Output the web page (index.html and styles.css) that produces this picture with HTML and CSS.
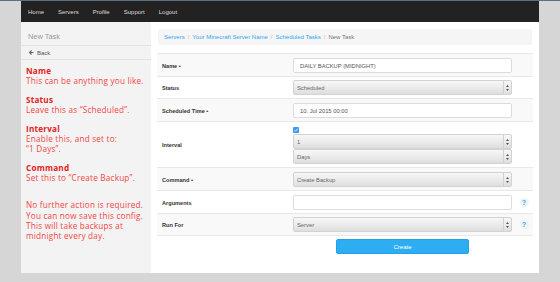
FILE: index.html
```html
<!DOCTYPE html>
<html lang="en">
  <head>
    <meta charset="UTF-8" />
    <meta name="viewport" content="width=device-width, initial-scale=1.0" />
    <title>New Task</title>
    <link rel="stylesheet" href="styles.css">
  </head>
  <body>
    <div class="frame">
      <nav class="navbar">
        <a href="#">Home</a>
        <a href="#">Servers</a>
        <a href="#">Profile</a>
        <a href="#">Support</a>
        <a href="#">Logout</a>
      </nav>

      <div class="layout">
        <aside class="sidebar">
          <div class="side_title">New Task</div>
          <a href="#" class="side_back">
            <svg width="5" height="5" viewBox="0 0 10 10">
              <path d="M5 1 L1 5 L5 9 M1 5 H9" fill="none" stroke="#666" stroke-width="2.2" />
            </svg>
            Back
          </a>

          <div class="notes">
            <div class="note">
              <b>Name</b>
              <p>This can be anything you like.</p>
            </div>
            <div class="note">
              <b>Status</b>
              <p>Leave this as “Scheduled”.</p>
            </div>
            <div class="note">
              <b>Interval</b>
              <p>Enable this, and set to:<br />“1 Days”.</p>
            </div>
            <div class="note">
              <b>Command</b>
              <p>Set this to “Create Backup”.</p>
            </div>
            <div class="note note_last">
              <p>No further action is required.<br />You can now save this config.<br />This will take backups at<br />midnight every day.</p>
            </div>
          </div>
        </aside>

        <main class="content">
          <ol class="breadcrumb">
            <li><a href="#">Servers</a></li>
            <li><a href="#">Your Minecraft Server Name</a></li>
            <li><a href="#">Scheduled Tasks</a></li>
            <li class="active">New Task</li>
          </ol>

          <form class="task_form">
            <div class="form_row striped">
              <label for="name">Name •</label>
              <input type="text" id="name" class="field" value="DAILY BACKUP (MIDNIGHT)" />
            </div>

            <div class="form_row slim">
              <label for="status">Status</label>
              <div class="select_wrap">
                <select id="status"><option>Scheduled</option></select>
                <span class="caret">
                  <svg width="3" height="6" viewBox="0 0 6 12"><path d="M3 0 L6 4 H0 Z M3 12 L6 8 H0 Z" fill="#555" /></svg>
                </span>
              </div>
            </div>

            <div class="form_row striped">
              <label for="time">Scheduled Time •</label>
              <input type="text" id="time" class="field" value="10. Jul 2015 00:00" />
            </div>

            <div class="form_row">
              <label>Interval</label>
              <div class="stack">
                <span class="check">
                  <svg width="6" height="6" viewBox="0 0 12 12"><path d="M3 6.5 L5 8.5 L9.5 3.5" fill="none" stroke="#fff" stroke-width="1.8" /></svg>
                </span>
                <div class="select_wrap">
                  <select><option>1</option></select>
                  <span class="caret">
                    <svg width="3" height="6" viewBox="0 0 6 12"><path d="M3 0 L6 4 H0 Z M3 12 L6 8 H0 Z" fill="#555" /></svg>
                  </span>
                </div>
                <div class="select_wrap">
                  <select><option>Days</option></select>
                  <span class="caret">
                    <svg width="3" height="6" viewBox="0 0 6 12"><path d="M3 0 L6 4 H0 Z M3 12 L6 8 H0 Z" fill="#555" /></svg>
                  </span>
                </div>
              </div>
            </div>

            <div class="form_row striped">
              <label for="command">Command •</label>
              <div class="select_wrap">
                <select id="command"><option>Create Backup</option></select>
                <span class="caret">
                  <svg width="3" height="6" viewBox="0 0 6 12"><path d="M3 0 L6 4 H0 Z M3 12 L6 8 H0 Z" fill="#555" /></svg>
                </span>
              </div>
            </div>

            <div class="form_row">
              <label for="args">Arguments</label>
              <input type="text" id="args" class="field" value="" />
              <span class="help">?</span>
            </div>

            <div class="form_row striped slim last">
              <label for="runfor">Run For</label>
              <div class="select_wrap">
                <select id="runfor"><option>Server</option></select>
                <span class="caret">
                  <svg width="3" height="6" viewBox="0 0 6 12"><path d="M3 0 L6 4 H0 Z M3 12 L6 8 H0 Z" fill="#555" /></svg>
                </span>
              </div>
              <span class="help">?</span>
            </div>

            <div class="button_row">
              <input type="submit" class="submit_btn" value="Create" />
            </div>
          </form>
        </main>
      </div>
    </div>
  </body>
</html>
```

FILE: styles.css
```css
* {
  margin: 0;
  padding: 0;
  box-sizing: border-box;
}

body {
  font-family: "Liberation Sans", Arial, sans-serif;
  background-color: #d6d6d6;
  border-top: 1px solid #5e6e7d;
  height: 282px;
  overflow: hidden;
}

a {
  text-decoration: none;
}

.frame {
  width: 518px;
  margin-left: 21px;
  background-color: #fff;
}

/* top navigation */
.navbar {
  height: 21px;
  background-color: #222;
  display: flex;
  align-items: center;
  gap: 14px;
  padding-left: 7px;
}

.navbar a {
  color: #ddd;
  font-size: 6px;
}

.layout {
  display: flex;
  height: 251px;
}

/* left column */
.sidebar {
  width: 130px;
  background-color: #f3f3f3;
}

.side_title {
  height: 24px;
  padding: 10px 7px 0;
  font-size: 7.4px;
  line-height: 10px;
  color: #9a9a9a;
  border-bottom: 1px solid #e3e3e3;
}

.side_back {
  display: flex;
  align-items: center;
  gap: 3px;
  height: 14px;
  padding-left: 8px;
  font-size: 6px;
  color: #555;
  border-bottom: 1px solid #e3e3e3;
}

.notes {
  padding: 6px 0 6px 5px;
  font-family: "Open Sans", "Noto Sans", sans-serif;
  font-size: 8.2px;
  letter-spacing: 0.2px;
  line-height: 10.2px;
  color: #f24646;
  white-space: nowrap;
}

.note {
  margin-bottom: 8.5px;
}

.note b {
  display: block;
  color: #e42222;
}

.note_last {
  margin-top: 17px;
}

/* main column */
.content {
  flex: 1;
  padding: 7px 6px 0;
}

.breadcrumb {
  list-style: none;
  display: flex;
  align-items: center;
  height: 16px;
  margin: 0 1px 8px;
  padding-left: 6px;
  background-color: #f5f5f5;
  border-radius: 2px;
  font-size: 6px;
}

.breadcrumb li + li::before {
  content: "/";
  color: #bbb;
  padding: 0 3px;
}

.breadcrumb a {
  color: #2fa8f0;
}

.breadcrumb .active {
  color: #777;
}

.form_row {
  display: grid;
  grid-template-columns: 136px 219px 21px;
  align-items: center;
  padding: 4px 0 3px;
  border-top: 1px solid #e8e8e8;
}

.form_row.slim {
  padding: 3px 0;
}

.form_row.striped {
  background-color: #f9f9f9;
}

.form_row.last {
  border-bottom: 1px solid #e8e8e8;
}

.form_row label {
  padding-left: 5px;
  font-size: 5.6px;
  font-weight: bold;
  color: #333;
}

.field {
  height: 15px;
  padding: 0 6px;
  border: 1px solid #dcdcdc;
  border-radius: 2px;
  background-color: #fff;
  font-family: inherit;
  font-size: 5.8px;
  color: #555;
}

.select_wrap {
  display: flex;
  height: 15px;
  border: 1px solid #d2d2d2;
  border-radius: 2px;
  background: linear-gradient(#f7f7f7, #e9e9e9 60%, #dedede);
}

.select_wrap select {
  flex: 1;
  appearance: none;
  border: none;
  background: transparent;
  padding-left: 3px;
  font-family: inherit;
  font-size: 5.8px;
  color: #666;
}

.caret {
  width: 8px;
  display: flex;
  align-items: center;
  justify-content: center;
  border-left: 1px solid #d2d2d2;
}

.stack {
  display: flex;
  flex-direction: column;
}

.check {
  width: 6px;
  height: 6px;
  margin: 1px 0 1px;
  border-radius: 1px;
  background-color: #3c97f5;
  display: flex;
}

.help {
  justify-self: center;
  margin-left: 3px;
  width: 9px;
  height: 9px;
  border-radius: 50%;
  background-color: #f2f2f2;
  color: #2fa8f0;
  font-size: 6.5px;
  font-weight: bold;
  line-height: 9px;
  text-align: center;
}

.button_row {
  display: grid;
  grid-template-columns: 136px 219px 21px;
  padding-top: 3px;
}

.submit_btn {
  grid-column: 2;
  justify-self: center;
  width: 133px;
  height: 15px;
  border: 1px solid #22a2ea;
  border-radius: 2px;
  background-color: #2eadf2;
  color: #fff;
  font-family: inherit;
  font-size: 6px;
}
```
